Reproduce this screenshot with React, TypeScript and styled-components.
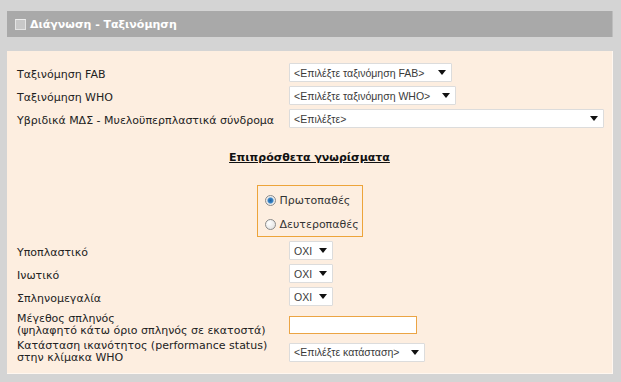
import styled, { createGlobalStyle } from "styled-components";

const GlobalStyle = createGlobalStyle`
  html, body {
    margin: 0;
    padding: 0;
    background: #d4d4d4;
  }
  body {
    font-family: "DejaVu Sans", Verdana, sans-serif;
    font-size: 11px;
    color: #222;
  }
`;

type Option = { label: string; width: number };

const Page = styled.div`
  width: 621px;
  height: 382px;
  padding: 11px 8px 0 7px;
  box-sizing: border-box;
`;

const Header = styled.div`
  height: 26px;
  background: #a9a9a9;
  border-right: 1px solid #bdbdbd;
  display: flex;
  align-items: center;
  gap: 4px;
  padding-left: 8px;
  box-sizing: border-box;
`;

const HeaderBox = styled.span`
  width: 9px;
  height: 9px;
  background: #c8c8c8;
  border: 1px solid #e4e4e4;
  border-top-color: #eee;
  display: inline-block;
`;

const HeaderTitle = styled.span`
  font-weight: bold;
  color: #fff;
  font-size: 11px;
`;

const Panel = styled.div`
  margin-top: 14px;
  height: 323px;
  background: #fdeee0;
  border-right: 1px solid #fff7f0;
  border-bottom: 1px solid #fff7f0;
  padding: 12px 10px 0 10px;
  box-sizing: border-box;
`;

const Row = styled.div<{ $h?: number }>`
  display: grid;
  grid-template-columns: 272px 1fr;
  align-items: center;
  min-height: ${(p) => p.$h ?? 23}px;
`;

const Label = styled.div`
  line-height: 12px;
  color: #222;
`;

const Control = styled.div<{ $center?: boolean }>`
  display: flex;
  align-items: ${(p) => (p.$center ? "center" : "flex-start")};
  height: 100%;
`;

const SelectBox = styled.div<{ $w: number }>`
  width: ${(p) => p.$w}px;
  height: 19px;
  box-sizing: border-box;
  background: #fff;
  border: 1px solid #dcdcdc;
  border-radius: 1px;
  display: flex;
  align-items: center;
  padding: 0 5px 0 4px;
  font-family: "Liberation Sans", Arial, sans-serif;
  font-size: 10.5px;
  color: #3a3a3a;
`;

const SelectText = styled.span`
  flex: 1;
  white-space: nowrap;
`;

const Arrow = styled.span`
  width: 0;
  height: 0;
  border-left: 4px solid transparent;
  border-right: 4px solid transparent;
  border-top: 5px solid #111;
  margin-left: 6px;
  flex-shrink: 0;
`;

const TextInput = styled.div`
  width: 128px;
  height: 18px;
  box-sizing: border-box;
  background: #fff;
  border: 1px solid #eba444;
`;

const Heading = styled.div`
  text-align: center;
  font-weight: bold;
  text-decoration: underline;
  color: #111;
  margin: 20px 0 0;
  line-height: 12px;
`;

const RadioWrap = styled.div`
  display: flex;
  justify-content: center;
  margin-top: 21px;
  margin-bottom: 4px;
`;

const RadioGroup = styled.div`
  width: 106px;
  height: 52px;
  box-sizing: border-box;
  border: 1px solid #eda43a;
  padding: 8px 0 0 7px;
  display: flex;
  flex-direction: column;
  gap: 11px;
`;

const RadioItem = styled.div`
  display: flex;
  align-items: center;
  gap: 4px;
  color: #333;
  height: 13px;
`;

const RadioDot = styled.span<{ $on?: boolean }>`
  width: 11px;
  height: 11px;
  border-radius: 50%;
  box-sizing: border-box;
  border: 1px solid #8a8a8a;
  background: ${(p) =>
    p.$on
      ? "radial-gradient(circle, #1e5f9e 0, #3b86c8 2.5px, #e8e8e8 3.5px, #fff 100%)"
      : "radial-gradient(circle at 35% 35%, #fff 0, #dcdcdc 100%)"};
`;

const Select = ({ label, width }: Option) => (
  <SelectBox $w={width}>
    <SelectText>{label}</SelectText>
    <Arrow />
  </SelectBox>
);

const App = () => {
  return (
    <>
      <GlobalStyle />
      <Page>
        <Header>
          <HeaderBox />
          <HeaderTitle>Διάγνωση - Ταξινόμηση</HeaderTitle>
        </Header>
        <Panel>
          <Row>
            <Label>Ταξινόμηση FAB</Label>
            <Control>
              <Select label="<Επιλέξτε ταξινόμηση FAB>" width={163} />
            </Control>
          </Row>
          <Row>
            <Label>Ταξινόμηση WHO</Label>
            <Control>
              <Select label="<Επιλέξτε ταξινόμηση WHO>" width={167} />
            </Control>
          </Row>
          <Row>
            <Label>Υβριδικά ΜΔΣ - Μυελοϋπερπλαστικά σύνδρομα</Label>
            <Control>
              <Select label="<Επιλέξτε>" width={315} />
            </Control>
          </Row>

          <Heading>Επιπρόσθετα γνωρίσματα</Heading>

          <RadioWrap>
            <RadioGroup>
              <RadioItem>
                <RadioDot $on />
                Πρωτοπαθές
              </RadioItem>
              <RadioItem>
                <RadioDot />
                Δευτεροπαθές
              </RadioItem>
            </RadioGroup>
          </RadioWrap>

          <Row>
            <Label>Υποπλαστικό</Label>
            <Control>
              <Select label="OXI" width={44} />
            </Control>
          </Row>
          <Row>
            <Label>Ινωτικό</Label>
            <Control>
              <Select label="OXI" width={44} />
            </Control>
          </Row>
          <Row>
            <Label>Σπληνομεγαλία</Label>
            <Control>
              <Select label="OXI" width={44} />
            </Control>
          </Row>
          <Row $h={29}>
            <Label>
              Μέγεθος σπληνός
              <br />
              (ψηλαφητό κάτω όριο σπληνός σε εκατοστά)
            </Label>
            <Control $center>
              <TextInput />
            </Control>
          </Row>
          <Row $h={26}>
            <Label>
              Κατάσταση ικανότητος (performance status)
              <br />
              στην κλίμακα WHO
            </Label>
            <Control $center>
              <Select label="<Επιλέξτε κατάσταση>" width={136} />
            </Control>
          </Row>
        </Panel>
      </Page>
    </>
  );
};

export default App;
